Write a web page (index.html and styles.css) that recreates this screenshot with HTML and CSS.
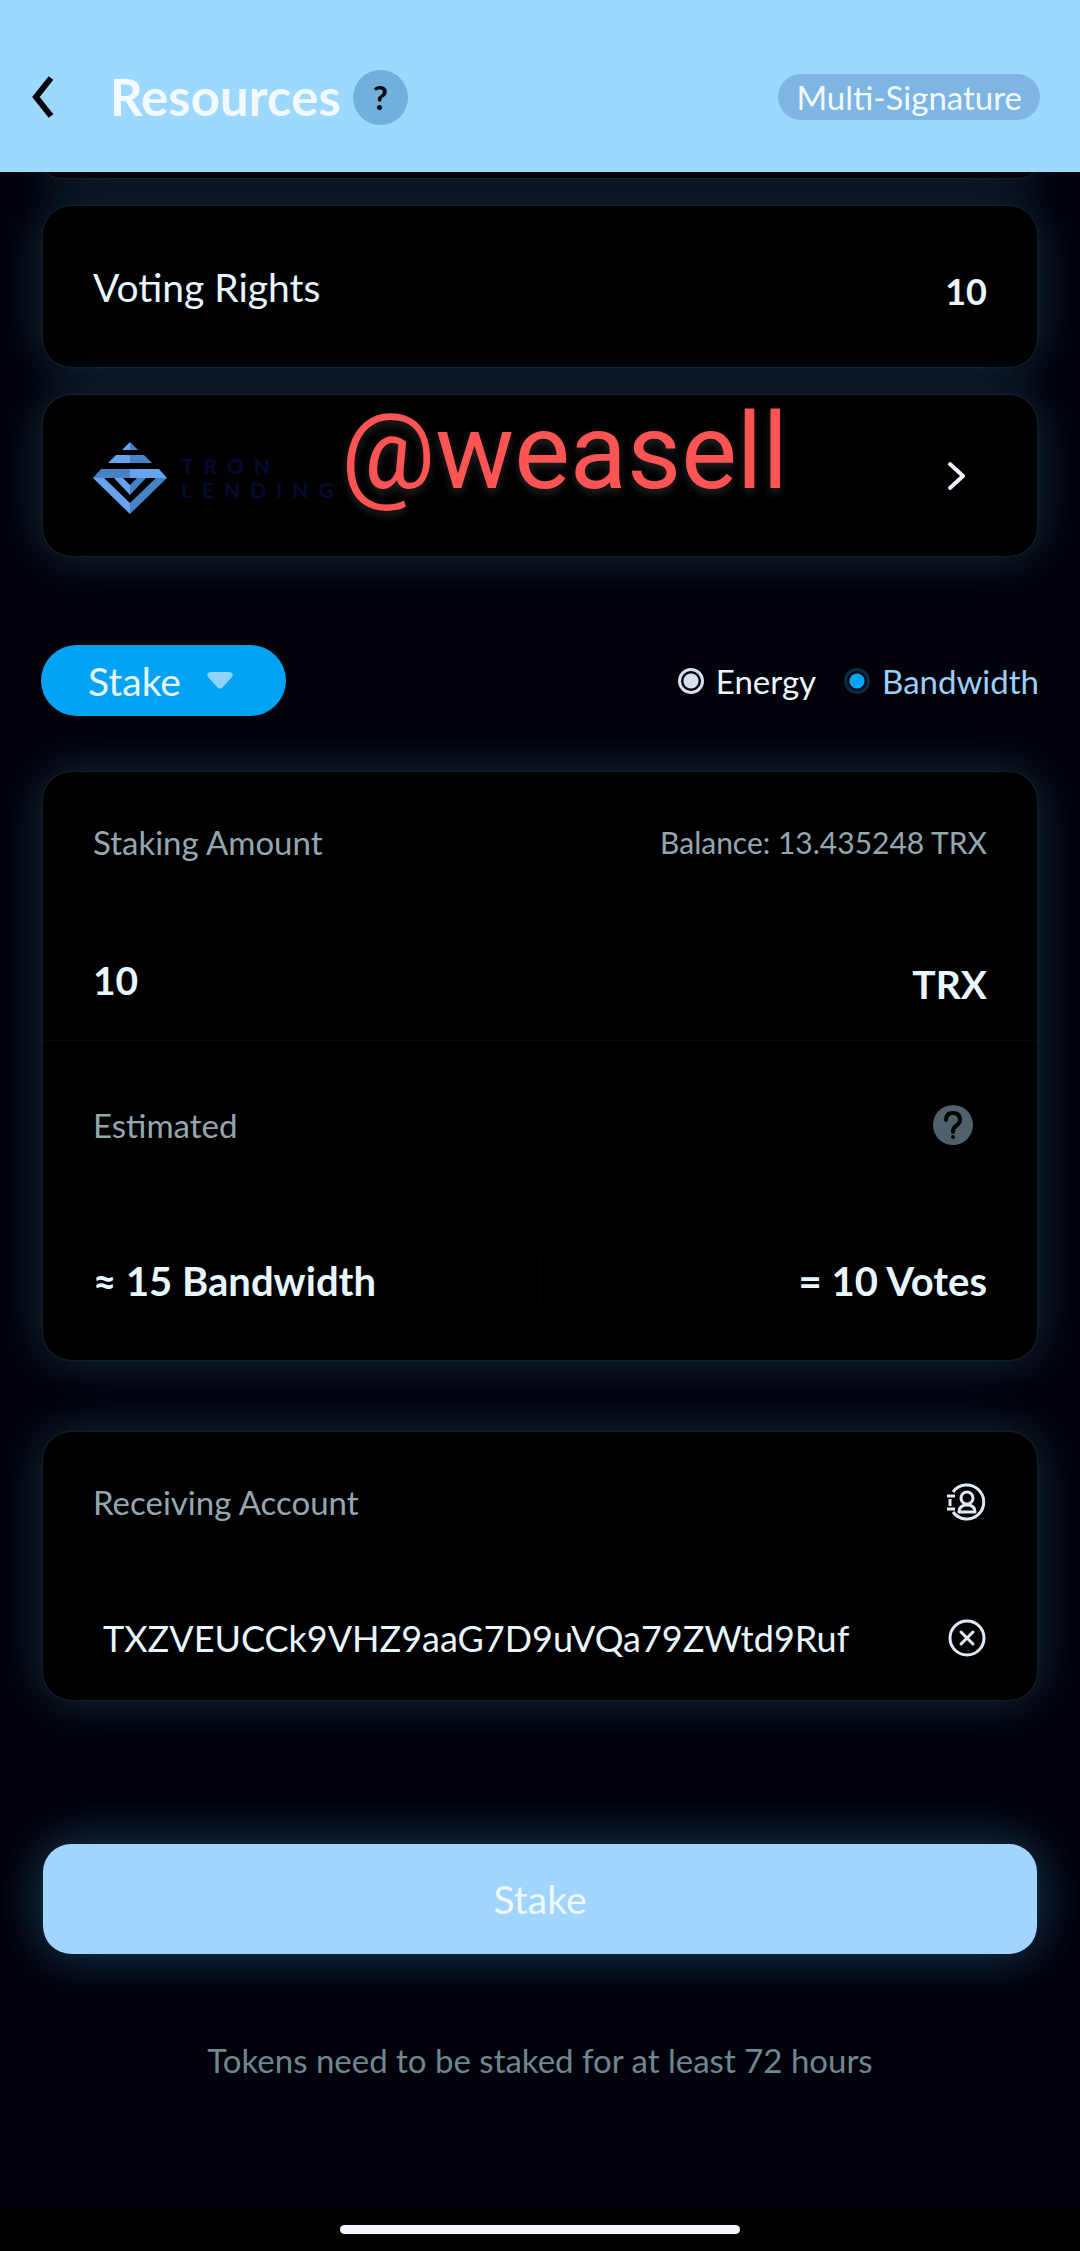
FILE: index.html
```
<!DOCTYPE html>
<html lang="en">
  <head>
    <meta charset="UTF-8" />
    <meta name="viewport" content="width=device-width, initial-scale=1.0" />
    <title>Resources</title>
    <link rel="stylesheet" href="styles.css">
  </head>
  <body>
    <header class="topbar">
      <button class="back" type="button" aria-label="Back">
        <svg width="22" height="42" viewBox="0 0 22 42" fill="none" stroke="#02040c" stroke-width="6">
          <path d="M19 2L4 21l15 19" />
        </svg>
      </button>
      <h1>Resources</h1>
      <button class="help" type="button" aria-label="Help">?</button>
      <button class="multisig" type="button">Multi-Signature</button>
    </header>

    <main>
      <div class="card card-previous"></div>

      <section class="card row-card">
        <span class="card-title">Voting Rights</span>
        <span class="votes-count">10</span>
      </section>

      <a class="card row-card" href="#">
        <svg class="lending-logo" width="74" height="72" viewBox="0 0 74 72">
          <path fill="#68a4ee" d="M37 0v8h-8zM23 13h14v8H15zM37 27h29l8 9H37zM0 36h11l26 25v11zM21 36h9l7 7v10z" />
          <path fill="#4583c6" d="M37 0v8h8zM37 13h14l8 8H37zM8 27h29v9H0zM74 36H63L37 61v11zM53 36h-9l-7 7v10z" />
        </svg>
        <span class="lending-name">TRON<br>LENDING</span>
        <span class="watermark">@weasell</span>
        <svg class="chevron" width="20" height="30" viewBox="0 0 20 30" fill="none" stroke="#eef4ff" stroke-width="4" stroke-linecap="round" stroke-linejoin="round">
          <path d="M3 3l13 12L3 27" />
        </svg>
      </a>

      <form>
        <div class="toolbar">
          <div class="mode">
            <select aria-label="Mode">
              <option>Stake</option>
              <option>Unstake</option>
            </select>
            <svg class="arrow" width="26" height="17" viewBox="0 0 26 17" fill="#8fd3fd">
              <path d="M3 0h20q4 1 2 5L15 16q-2 1-4 0L1 5q-2-4 2-5z" />
            </svg>
          </div>
          <label class="energy"><input type="radio" name="resource" value="energy">Energy</label>
          <label class="bandwidth"><input type="radio" name="resource" value="bandwidth" checked>Bandwidth</label>
        </div>

        <section class="card stake-card">
          <div class="amount">
            <div class="line">
              <label for="amount">Staking Amount</label>
              <span class="balance">Balance: 13.435248 TRX</span>
            </div>
            <div class="line values">
              <input type="text" id="amount" value="10">
              <span class="unit">TRX</span>
            </div>
          </div>
          <div class="estimate">
            <div class="line">
              <span>Estimated</span>
              <button class="icon-button info" type="button" aria-label="About the estimate">
                <svg width="40" height="40" viewBox="0 0 40 40">
                  <circle cx="20" cy="20" r="20" fill="#50616b" />
                  <path d="M13 15q0-7 7-7t7 7q0 3-4 6-3 2-3 6" fill="none" stroke="#000" stroke-width="4" stroke-linecap="round" />
                  <circle cx="20" cy="32" r="2" fill="#000" />
                </svg>
              </button>
            </div>
            <div class="line values results">
              <span>≈ 15 Bandwidth</span>
              <span>= 10 Votes</span>
            </div>
          </div>
        </section>

        <section class="card account-card">
          <div class="line">
            <label for="account">Receiving Account</label>
            <button class="icon-button" type="button" aria-label="Address book">
              <svg width="40" height="40" viewBox="0 0 40 40" fill="none" stroke="#dfe9f7" stroke-width="3">
                <path d="M6 10a17 17 0 1 1 0 20" />
                <path d="M0 14h8M0 27h8M3 17v7" />
                <circle cx="20" cy="16" r="6" />
                <path d="M12 30q0-7 8-7t8 7z" stroke-linejoin="round" />
              </svg>
            </button>
          </div>
          <div class="line values">
            <input type="text" id="account" value="TXZVEUCCk9VHZ9aaG7D9uVQa79ZWtd9Ruf">
            <button class="icon-button" type="button" aria-label="Clear">
              <svg width="40" height="40" viewBox="0 0 40 40" fill="none" stroke="#dfe9f7" stroke-width="3" stroke-linecap="round">
                <circle cx="20" cy="20" r="17" />
                <path d="M14 14l12 12M26 14L14 26" />
              </svg>
            </button>
          </div>
        </section>

        <button class="submit" type="submit">Stake</button>
        <p class="note">Tokens need to be staked for at least 72 hours</p>
      </form>
    </main>

    <footer>
      <div class="home-bar"></div>
    </footer>
  </body>
</html>
```
FILE: styles.css
```
* {
  box-sizing: border-box;
}

body {
  display: flex;
  flex-direction: column;
  min-height: 100vh;
  margin: 0;
  background-color: #02020a;
  color: #e8f6ff;
  font-family: Lato, Carlito, "Open Sans", sans-serif;
  font-size: 33px;
  line-height: 44px;
}

button,
input,
select {
  padding: 0;
  border: none;
  background: none;
  color: inherit;
  font: inherit;
}

button,
select {
  cursor: pointer;
}

svg {
  display: block;
  flex: none;
}

/* Top bar */
.topbar {
  position: relative;
  z-index: 1;
  display: flex;
  align-items: center;
  height: 172px;
  padding: 22px 40px 0 32px;
  background-color: #9dd8fe;
}

h1 {
  margin: 0 12px 0 56px;
  color: #f2f9ff;
  font-size: 51px;
  line-height: 60px;
}

.help {
  width: 55px;
  height: 55px;
  border-radius: 50%;
  background-color: #71b0dc;
  color: #02040c;
  font-size: 33px;
  font-weight: bold;
}

.multisig {
  height: 46px;
  margin-left: auto;
  padding: 0 18px;
  border-radius: 23px;
  background-color: #7db5e3;
  color: #f2f9ff;
}

/* Cards */
main {
  flex: 1;
  padding: 0 43px;
}

.card {
  border-radius: 28px;
  background-color: #000;
  box-shadow: 0 0 2px #2b4050, 0 0 50px rgba(50, 110, 145, 0.4);
}

.card-previous {
  height: 34px;
  margin-top: -28px;
}

.row-card {
  position: relative;
  display: flex;
  align-items: center;
  height: 161px;
  margin-top: 28px;
  padding: 0 50px;
  color: inherit;
  text-decoration: none;
}

.card-title {
  font-size: 39px;
}

.votes-count {
  margin-left: auto;
  padding-top: 8px;
  font-size: 36px;
  font-weight: bold;
}

.lending-logo {
  margin-top: 4px;
}

.lending-name {
  margin-left: 14px;
  padding-top: 4px;
  color: #020a30;
  font-size: 21px;
  font-weight: bold;
  letter-spacing: 10px;
  line-height: 24px;
}

.watermark {
  position: absolute;
  top: 0;
  left: 298px;
  color: #ff5454;
  font-family: Roboto, sans-serif;
  font-size: 105px;
  line-height: 116px;
  text-shadow: 0 4px 8px rgba(255, 255, 255, 0.15);
}

.chevron {
  margin-right: 20px;
  margin-left: auto;
}

/* Mode and resource choice */
.toolbar {
  display: flex;
  align-items: center;
  margin: 89px -2px 56px;
}

.mode {
  position: relative;
  margin-right: auto;
}

.mode select {
  width: 245px;
  height: 71px;
  padding-left: 47px;
  border-radius: 36px;
  appearance: none;
  background-color: #02a3f5;
  font-size: 39px;
}

.arrow {
  position: absolute;
  top: 27px;
  right: 53px;
  pointer-events: none;
}

.toolbar label {
  display: flex;
  align-items: center;
  gap: 12px;
  margin-left: 28px;
}

.toolbar input {
  width: 26px;
  height: 26px;
  margin: 0;
  border: 3px solid #d5dff0;
  border-radius: 50%;
  appearance: none;
  background: radial-gradient(circle, #d5dff0 7px, transparent 8px);
}

.toolbar .bandwidth {
  color: #9dcffb;
}

.toolbar .bandwidth input {
  border-color: #0d2c48;
  background: radial-gradient(circle, #02a3f5 7px, #020a1c 8px);
}

/* Staking form */
.line {
  display: flex;
  align-items: center;
  justify-content: space-between;
  height: 44px;
  color: #94a7b1;
}

.line input {
  flex: 1;
  min-width: 0;
}

.balance {
  font-size: 30px;
}

.values {
  height: 56px;
  color: #e8f6ff;
}

.amount {
  padding: 48px 50px 32px;
  border-bottom: 1px solid #07090c;
}

.amount .values {
  margin-top: 88px;
  font-size: 39px;
  font-weight: bold;
}

.unit {
  padding-top: 8px;
}

.estimate {
  padding: 62px 50px 51px;
}

.info {
  margin-right: 14px;
}

.results {
  margin-top: 106px;
  font-size: 40px;
  font-weight: bold;
}

.results span {
  flex: 1;
}

.results span:last-child {
  border-left: 1px solid #07090c;
  text-align: right;
}

.account-card {
  margin-top: 72px;
  padding: 48px 50px 34px;
}

.account-card .values {
  margin-top: 86px;
}

#account {
  padding-left: 10px;
  font-size: 36px;
}

.submit {
  display: block;
  width: 100%;
  height: 110px;
  margin-top: 144px;
  border-radius: 28px;
  background-color: #a2d5fd;
  box-shadow: 0 0 50px rgba(45, 125, 185, 0.5);
  color: #eef8ff;
  font-size: 39px;
}

.note {
  margin: 84px 0;
  color: #6f8791;
  text-align: center;
}

footer {
  display: flex;
  justify-content: center;
  padding: 18px 0 17px;
  background-color: #000;
}

.home-bar {
  width: 37%;
  height: 9px;
  border-radius: 5px;
  background-color: #f2f6ff;
}
```
